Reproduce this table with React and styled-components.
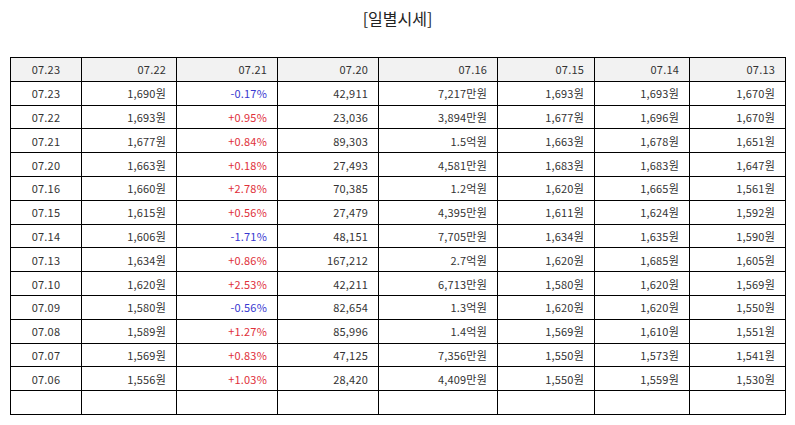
import React from 'react';
import styled, { createGlobalStyle } from 'styled-components';

const GlobalStyle = createGlobalStyle`
  html, body {
    margin: 0;
    padding: 0;
    background: #fff;
  }
  body {
    font-family: "Noto Sans CJK KR", "Noto Sans", sans-serif;
    color: #222;
  }
`;

const widths = [71, 95, 101, 101, 119, 97, 95, 96];
const headers = ['07.23', '07.22', '07.21', '07.20', '07.16', '07.15', '07.14', '07.13'];

const rows = [
  ['07.23', '1,690원', '-0.17%', '42,911', '7,217만원', '1,693원', '1,693원', '1,670원'],
  ['07.22', '1,693원', '+0.95%', '23,036', '3,894만원', '1,677원', '1,696원', '1,670원'],
  ['07.21', '1,677원', '+0.84%', '89,303', '1.5억원', '1,663원', '1,678원', '1,651원'],
  ['07.20', '1,663원', '+0.18%', '27,493', '4,581만원', '1,683원', '1,683원', '1,647원'],
  ['07.16', '1,660원', '+2.78%', '70,385', '1.2억원', '1,620원', '1,665원', '1,561원'],
  ['07.15', '1,615원', '+0.56%', '27,479', '4,395만원', '1,611원', '1,624원', '1,592원'],
  ['07.14', '1,606원', '-1.71%', '48,151', '7,705만원', '1,634원', '1,635원', '1,590원'],
  ['07.13', '1,634원', '+0.86%', '167,212', '2.7억원', '1,620원', '1,685원', '1,605원'],
  ['07.10', '1,620원', '+2.53%', '42,211', '6,713만원', '1,580원', '1,620원', '1,569원'],
  ['07.09', '1,580원', '-0.56%', '82,654', '1.3억원', '1,620원', '1,620원', '1,550원'],
  ['07.08', '1,589원', '+1.27%', '85,996', '1.4억원', '1,569원', '1,610원', '1,551원'],
  ['07.07', '1,569원', '+0.83%', '47,125', '7,356만원', '1,550원', '1,573원', '1,541원'],
  ['07.06', '1,556원', '+1.03%', '28,420', '4,409만원', '1,550원', '1,559원', '1,530원'],
];

const trend = (v) => (v.startsWith('-') ? 'down' : v.startsWith('+') ? 'up' : null);

export default function App() {
  return (
    <>
      <GlobalStyle />
      <Page>
        <Title>[일별시세]</Title>
        <Table>
          <colgroup>
            {widths.map((w, i) => (
              <col key={i} style={{ width: w }} />
            ))}
          </colgroup>
          <thead>
            <Row>
              {headers.map((h, i) => (
                <HeadCell key={i} $center={i === 0}>{h}</HeadCell>
              ))}
            </Row>
          </thead>
          <tbody>
            {rows.map((r, ri) => (
              <Row key={ri}>
                {r.map((v, i) => (
                  <Cell key={i} $center={i === 0} $trend={i === 2 ? trend(v) : null}>
                    {v}
                  </Cell>
                ))}
              </Row>
            ))}
            <Row>
              {widths.map((_, i) => (
                <Cell key={i} />
              ))}
            </Row>
          </tbody>
        </Table>
      </Page>
    </>
  );
}

const Page = styled.div`
  width: 795px;
  padding: 7px 10px 0;
  box-sizing: border-box;
`;

const Title = styled.h2`
  margin: 0 0 28px;
  text-align: center;
  font-size: 16px;
  font-weight: 400;
  line-height: 22px;
  color: #222;
`;

const Table = styled.table`
  width: 776px;
  table-layout: fixed;
  border-collapse: collapse;
  font-size: 11px;
`;

const Row = styled.tr`
  height: 23.8px;
`;

const Cell = styled.td`
  border: 1px solid #000;
  padding: 0 10px;
  text-align: ${(p) => (p.$center ? 'center' : 'right')};
  color: ${(p) => (p.$trend === 'up' ? '#e0303a' : p.$trend === 'down' ? '#3838d0' : '#333')};
  white-space: nowrap;
  line-height: 14px;
  letter-spacing: 0.2px;
`;

const HeadCell = styled(Cell).attrs({ as: 'th' })`
  background: #f2f2f2;
  font-weight: 400;
`;
